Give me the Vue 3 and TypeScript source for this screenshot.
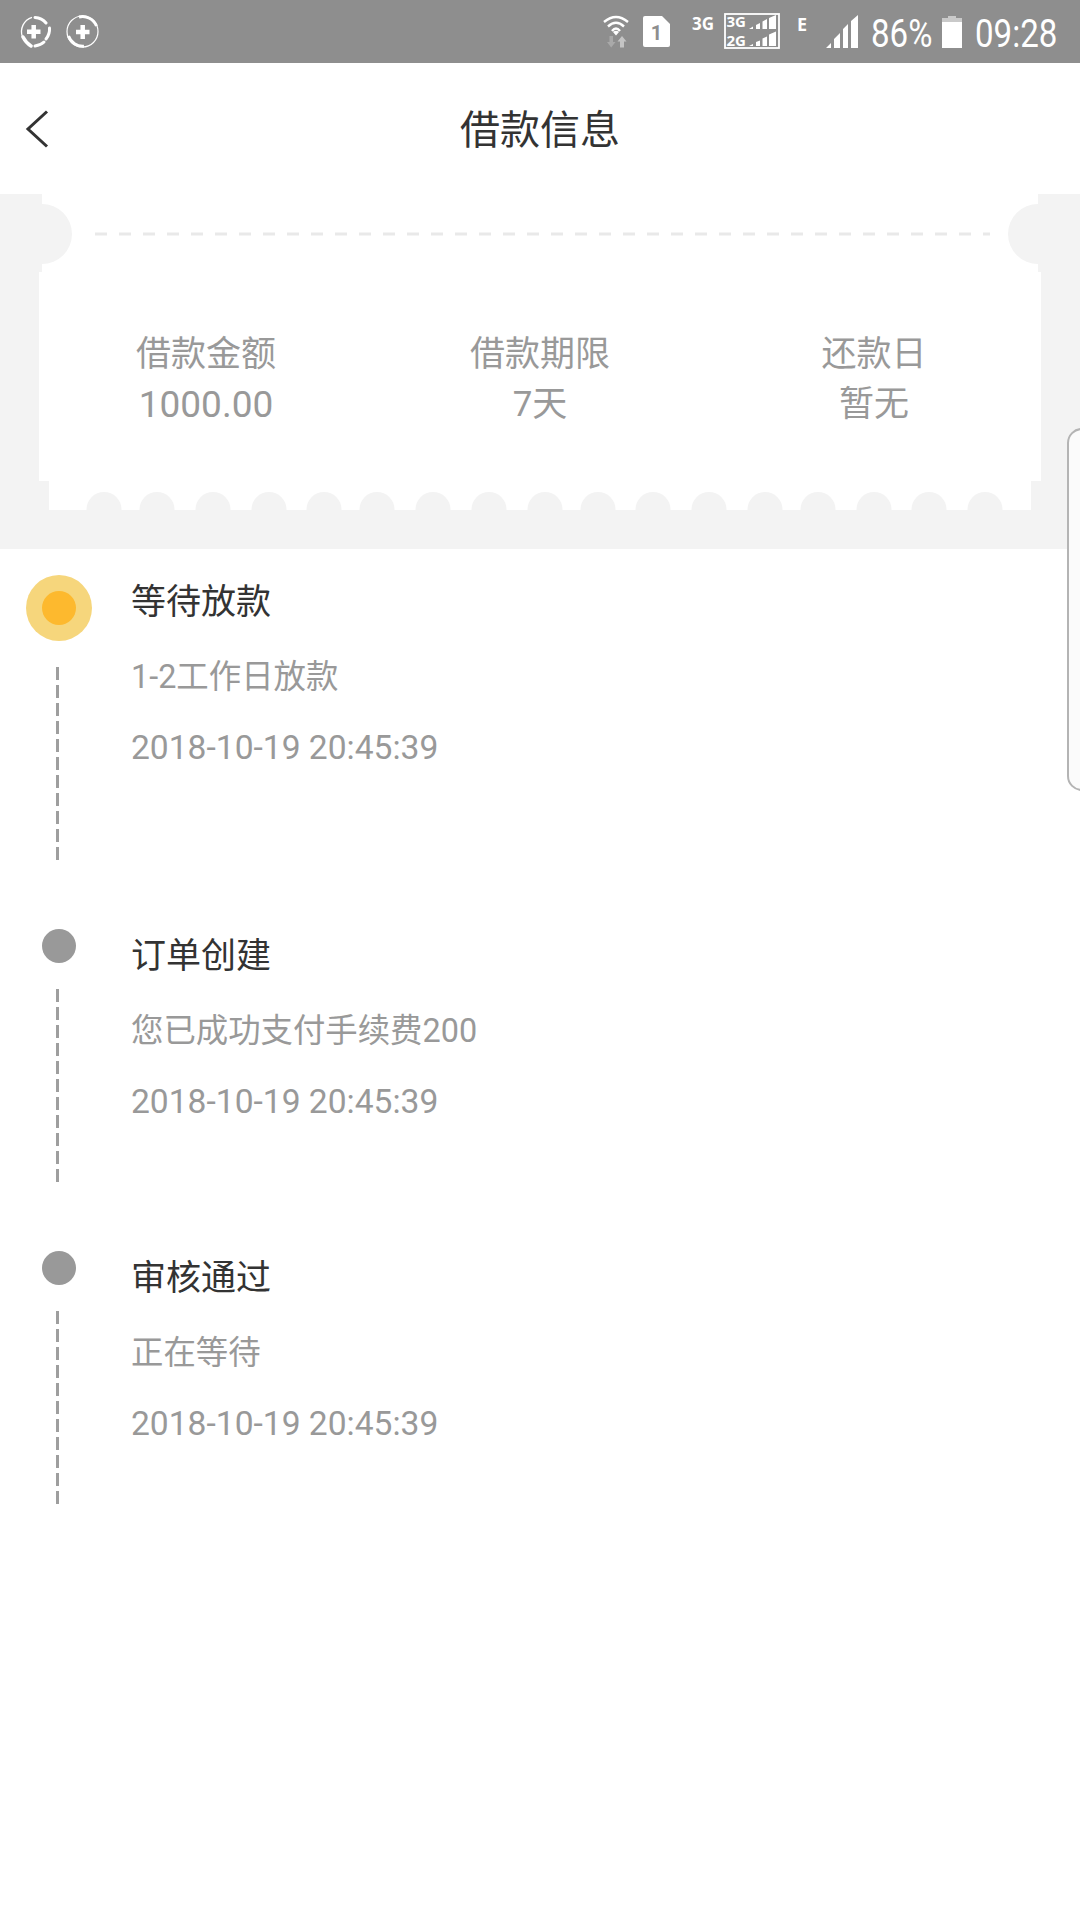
<script setup lang="ts">
interface Step { title: string; sub: string; time: string; active?: boolean }
const steps: Step[] = [
  { title: '等待放款', sub: '1-2工作日放款', time: '2018-10-19 20:45:39', active: true },
  { title: '订单创建', sub: '您已成功支付手续费200', time: '2018-10-19 20:45:39' },
  { title: '审核通过', sub: '正在等待', time: '2018-10-19 20:45:39' }
]
const stats = [
  { label: '借款金额', value: '1000.00', cjk: false },
  { label: '借款期限', value: '7天', cjk: true },
  { label: '还款日', value: '暂无', cjk: true }
]
const bumps: number[] = [104, 157, 213, 269, 324, 377, 433, 489, 545, 598, 653, 709, 765, 818, 874, 929, 985]
</script>

<template>
  <div class="page">
    <div class="status">
      <div class="status-left">
        <svg class="app-icon first" viewBox="0 0 34 32" fill="none" stroke="#fff">
          <path d="M4.500 21A15 15 0 0 1 14 1.300" stroke-width="1.300" />
          <path d="M5 21Q8 27 13 30" stroke-width="3.500" stroke-linecap="round" />
          <path d="M17 30Q23 29 26 26M31.500 12Q32 18 28 23" stroke-width="3" stroke-linecap="round" />
          <path d="M17 1.500Q24 2 28 7" stroke-width="3" stroke-linecap="round" />
          <path d="M15.700 9V22.500M9 15.700H22.500" stroke-width="4.500" />
        </svg>
        <svg class="app-icon second" viewBox="0 0 33 33" fill="none" stroke="#fff">
          <circle cx="16.500" cy="16.500" r="15.500" stroke-width="1.200" />
          <path d="M2.500 21A15 15 0 0 0 18 31.200" stroke-width="3" />
          <path d="M13 2A15 15 0 0 1 30.500 11" stroke-width="3" />
          <path d="M16.700 10V24M10 17H23.500" stroke-width="4.500" />
        </svg>
      </div>
      <div class="status-right">
        <svg class="wifi" viewBox="0 0 26 33" fill="none" stroke="#fff" stroke-width="2.400">
          <path d="M1 7Q13 -3 25 7M5 11.500Q13 4 21 11.500M9 16Q13 11 17 16" />
          <path d="M10 17L13 20.500L16 17Q13 14.500 10 17Z" fill="#fff" stroke="none" />
          <path d="M6.500 21H10V27H12.500L8.200 32.500L4 27H6.500Z" fill="#a9a9a9" stroke="none" />
          <path d="M17 32.500H21V26.500H23.500L19 21L14.500 26.500H17Z" fill="#c4c4c4" stroke="none" />
        </svg>
        <svg class="sim" viewBox="0 0 27 31">
          <path d="M2 0H19L27 8V29Q27 31 25 31H2Q0 31 0 29V2Q0 0 2 0Z" fill="#fff" />
          <text x="13.500" y="24" text-anchor="middle" class="sim-num">1</text>
        </svg>
        <span class="net net-3g">3G</span>
        <svg class="dual" viewBox="0 0 56 36">
          <rect x="1" y="1" width="54" height="34" fill="none" stroke="#fff" stroke-width="1.800" />
          <text x="2.500" y="14" class="dual-txt">3G</text>
          <text x="2.500" y="32.500" class="dual-txt">2G</text>
          <path fill="#fff" d="M25 16L29 13.500V16ZM32 16V12L36 10V16ZM38.500 16V8.500L43 6V16ZM45 16V5L52 2V16Z" />
          <path fill="#fff" d="M25 33L29 31V33ZM32 33V29L36 27.500V33ZM38.500 33V25.500L43 23.500V33ZM45 33V21.500L52 18.500V33Z" />
        </svg>
        <span class="net net-e">E</span>
        <svg class="signal" viewBox="0 0 32 33" fill="#fff">
          <path d="M0 33L5 28V33ZM8 33V24L14 18V33ZM17 33V14L22 9V33ZM25 33V6L32 0V33Z" />
        </svg>
        <span class="clock pct">86%</span>
        <svg class="battery" viewBox="0 0 20 32">
          <rect x="6" y="0" width="8" height="3" fill="#c9c9c9" />
          <rect x="0" y="2" width="20" height="4" fill="#c9c9c9" />
          <rect x="0" y="6" width="20" height="26" fill="#fff" />
        </svg>
        <span class="clock time">09:28</span>
      </div>
    </div>

    <header class="nav">
      <div class="nav-side">
        <svg class="back" viewBox="0 0 24 38" fill="none" stroke="#333" stroke-width="3">
          <path d="M22 1.500L3 19L22 36.500" />
        </svg>
      </div>
      <h1 class="nav-title">借款信息</h1>
      <div class="nav-side"></div>
    </header>

    <section class="band">
      <svg class="ticket" viewBox="0 0 1080 355">
        <path fill="#fff" d="M42 0H1038V10A30 30 0 0 0 1038 70V78H1041V287H1031V316H49V287H39V78H42V70A30 30 0 0 0 42 10Z" />
        <circle v-for="x in bumps" :key="x" :cx="x" cy="315.500" r="17.500" fill="#f3f3f3" />
        <line x1="95" y1="40" x2="990" y2="40" stroke="#e9e9e9" stroke-width="3" stroke-dasharray="12 12" />
      </svg>
      <div class="stats">
        <div v-for="s in stats" :key="s.label" class="stat">
          <div class="stat-label">{{ s.label }}</div>
          <div class="stat-value" :class="{ cjk: s.cjk }">{{ s.value }}</div>
        </div>
      </div>
    </section>

    <section class="steps">
      <div v-for="s in steps" :key="s.title" class="step">
        <div class="rail">
          <div v-if="s.active" class="dot-big"><div class="dot-core"></div></div>
          <div v-else class="dot"></div>
          <div class="line"></div>
        </div>
        <div class="body">
          <div class="step-title">{{ s.title }}</div>
          <div class="step-sub">{{ s.sub }}</div>
          <div class="step-time">{{ s.time }}</div>
        </div>
      </div>
    </section>

    <div class="edge-tab"></div>
  </div>
</template>

<style scoped>
.page {
  position: relative;
  width: 1080px;
  height: 1920px;
  overflow: hidden;
  background: #fff;
  font-family: Roboto, "Noto Sans CJK SC", sans-serif;
}
.status {
  height: 63px;
  background: #8e8e8e;
  display: flex;
  align-items: flex-start;
  justify-content: space-between;
  color: #fff;
}
.status-left { display: flex; align-items: flex-start; padding: 15px 0 0 18px; }
.app-icon { display: block; }
.first { width: 34px; height: 32px; margin-top: 1px; }
.second { width: 33px; height: 33px; margin-left: 14px; }
.status-right { display: flex; align-items: flex-start; padding-right: 24px; }
.wifi { width: 26px; height: 33px; margin-top: 15px; }
.sim { width: 27px; height: 31px; margin: 16px 0 0 14px; }
.sim-num { font: 700 20px Roboto, sans-serif; fill: #8e8e8e; }
.net { font: 700 17px/20px "Open Sans", sans-serif; }
.net-3g { width: 24px; margin: 14px 0 0 22px; }
.dual { width: 56px; height: 36px; margin: 13px 0 0 8px; overflow: visible; }
.dual-txt { font: 700 15px "Open Sans", sans-serif; fill: #fff; }
.net-e { width: 10px; margin: 14px 0 0 17px; font-size: 18px; }
.signal { width: 32px; height: 33px; margin: 15px 0 0 19px; }
.clock {
  font-size: 38px;
  line-height: 44px;
  margin-top: 12px;
  display: inline-block;
  white-space: nowrap;
  transform-origin: left center;
  transform: scaleX(.87);
}
.pct { width: 60px; margin-left: 13px; }
.battery { width: 20px; height: 32px; margin: 16px 0 0 11px; }
.time { width: 81px; margin-left: 13px; }

.nav {
  height: 131px;
  display: grid;
  grid-template-columns: 1fr auto 1fr;
  align-items: center;
}
.back { display: block; width: 24px; height: 38px; margin: 0 0 0 25px; }
.nav-title {
  margin: 4px 0 0;
  font-size: 40px;
  line-height: 50px;
  font-weight: 400;
  color: #333;
}

.band {
  position: relative;
  height: 355px;
  background: #f3f3f3;
}
.ticket { position: absolute; inset: 0; width: 1080px; height: 355px; }
.stats {
  position: relative;
  display: grid;
  grid-template-columns: repeat(3, 334px);
  padding: 136px 0 0 39px;
}
.stat { text-align: center; color: #999; }
.stat-label { font-size: 35px; line-height: 50px; }
.stat-value { font-size: 37px; line-height: 50px; }
.stat-value.cjk { font-size: 35px; }

.steps { padding-top: 25px; }
.step { display: flex; margin-bottom: 68px; }
.rail { width: 131px; flex: none; }
.dot-big {
  width: 66px;
  height: 66px;
  margin: 1px 0 -1px 26px;
  border-radius: 50%;
  background: #f6d67c;
  display: flex;
  align-items: center;
  justify-content: center;
}
.dot-core { width: 34px; height: 34px; border-radius: 50%; background: #fdb92e; }
.dot { width: 34px; height: 34px; margin: 1px 0 -1px 42px; border-radius: 50%; background: #999; }
.line {
  width: 3px;
  height: 193px;
  margin: 27px 0 0 56px;
  background: repeating-linear-gradient(to bottom, #9e9e9e 0 13px, transparent 13px 18px);
}
.body { padding-top: 4px; }
.step-title { font-size: 35px; line-height: 50px; color: #333; }
.step-sub { font-size: 32.400px; line-height: 50px; margin-top: 24px; color: #999; }
.step-time { font-size: 33.600px; line-height: 50px; margin-top: 21px; color: #999; }

.edge-tab {
  position: absolute;
  left: 1067px;
  top: 428px;
  width: 30px;
  height: 363px;
  box-sizing: border-box;
  border: 2px solid #b4b4b4;
  border-radius: 16px;
  background: #fbfbfb;
}
</style>
